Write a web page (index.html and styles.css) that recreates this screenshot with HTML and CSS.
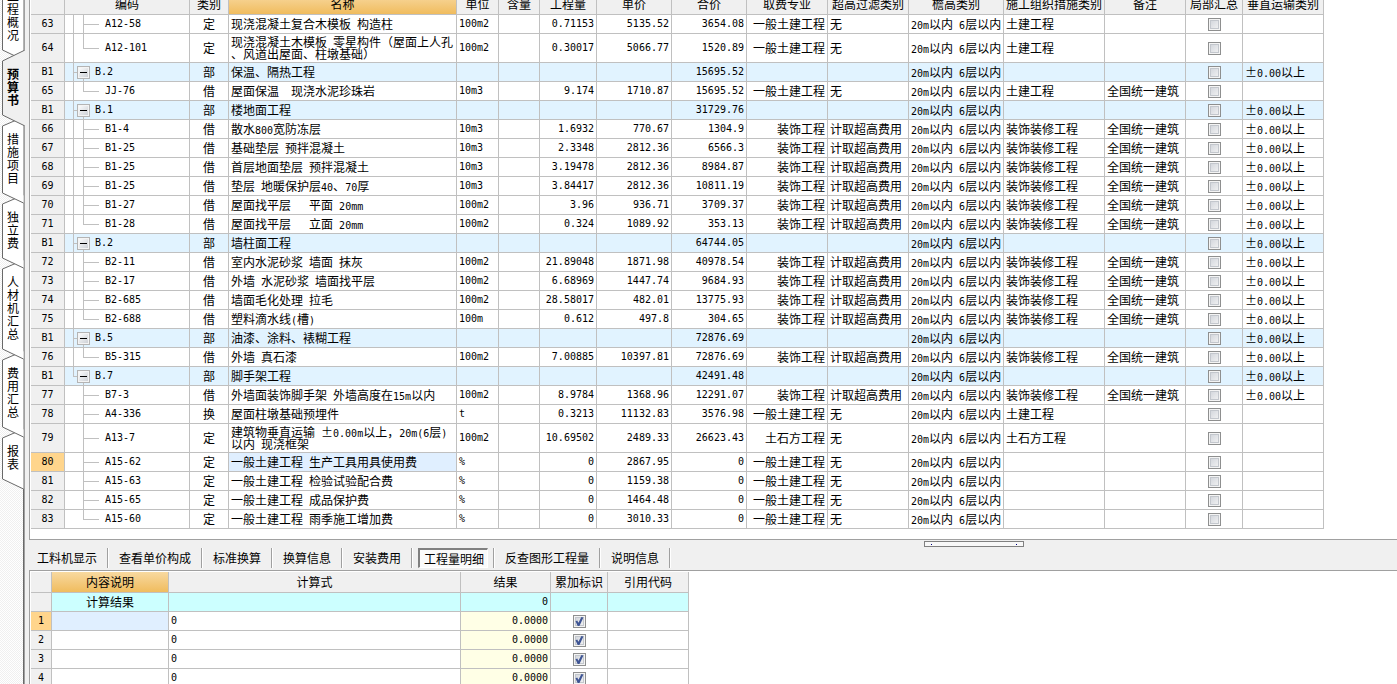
FILE: index.html
```html
<!DOCTYPE html>
<html lang="zh-CN">
<head>
<meta charset="utf-8">
<title>预算书</title>
<link rel="stylesheet" href="styles.css">
</head>
<body>
<nav class="side" aria-label="工程页签">
  <button class="side-tab"><svg class="tab-shape" width="26" height="78"><path d="M23.500-4L2.500 5V72L23.500 82"/></svg><span class="tab-text">工程概况</span></button>
  <button class="side-tab current"><svg class="tab-shape" width="26" height="65"><path class="cover" d="M22-5H26V69H22Z"/><path d="M24-5.500L2.500 5V59L24 69.500"/></svg><span class="tab-text">预算书</span></button>
  <button class="side-tab"><svg class="tab-shape" width="26" height="78"><path d="M23.500-4L2.500 5V72L23.500 82"/></svg><span class="tab-text">措施项目</span></button>
  <button class="side-tab"><svg class="tab-shape" width="26" height="65"><path d="M23.500-4L2.500 5V59L23.500 69"/></svg><span class="tab-text">独立费</span></button>
  <button class="side-tab"><svg class="tab-shape" width="26" height="91"><path d="M23.500-4L2.500 5V85L23.500 95"/></svg><span class="tab-text">人材机汇总</span></button>
  <button class="side-tab"><svg class="tab-shape" width="26" height="78"><path d="M23.500-4L2.500 5V72L23.500 82"/></svg><span class="tab-text">费用汇总</span></button>
  <button class="side-tab"><svg class="tab-shape" width="26" height="52"><path d="M23.500-4L2.500 5V46L23.500 56"/></svg><span class="tab-text">报表</span></button>
</nav>
<main class="main">
  <section class="panel budget">
    <table class="grid">
      <colgroup>
        <col class="w34"><col class="w125"><col class="w39"><col class="w228"><col class="w42"><col class="w41"><col class="w57"><col class="w75"><col class="w75"><col class="w81"><col class="w81"><col class="w95"><col class="w101"><col class="w81"><col class="w57"><col class="w81">
      </colgroup>
      <thead>
        <tr><th></th><th>编码</th><th>类别</th><th class="hot">名称</th><th>单位</th><th>含量</th><th>工程量</th><th>单价</th><th>合价</th><th>取费专业</th><th>超高过滤类别</th><th>檐高类别</th><th>施工组织措施类别</th><th>备注</th><th>局部汇总</th><th>垂直运输类别</th></tr>
      </thead>
      <tbody id="budget-rows"></tbody>
    </table>
  </section>
  <div class="splitter"><button class="handle" aria-label="调整面板高度"></button></div>
  <div class="tabs" role="tablist">
    <div class="slot"><button class="tab" role="tab">工料机显示</button></div>
    <div class="slot"><button class="tab" role="tab">查看单价构成</button></div>
    <div class="slot"><button class="tab" role="tab">标准换算</button></div>
    <div class="slot"><button class="tab" role="tab">换算信息</button></div>
    <div class="slot"><button class="tab" role="tab">安装费用</button></div>
    <div class="slot"><button class="tab pressed" role="tab" aria-selected="true">工程量明细</button></div>
    <div class="slot"><button class="tab" role="tab">反查图形工程量</button></div>
    <div class="slot"><button class="tab" role="tab">说明信息</button></div>
  </div>
  <section class="panel detail">
    <table class="grid">
      <colgroup><col class="w21"><col class="w117"><col class="w292"><col class="w90"><col class="w57"><col class="w81"></colgroup>
      <thead>
        <tr><th></th><th class="hot">内容说明</th><th>计算式</th><th>结果</th><th>累加标识</th><th>引用代码</th></tr>
      </thead>
      <tbody id="detail-rows">
        <tr class="total"><td class="label"></td><td class="center">计算结果</td><td></td><td class="num">0</td><td></td><td></td></tr>
      </tbody>
    </table>
  </section>
</main>
<script src="app.js"></script>
</body>
</html>
```
FILE: styles.css
```css
* { box-sizing: border-box; }

body {
  margin: 0;
  height: 100vh;
  display: flex;
  overflow: hidden;
  background: #f0f0f0;
  color: #000;
  font: 12px/18px "Noto Sans CJK SC", sans-serif;
}

button {
  font: inherit;
  color: inherit;
  border: 0;
  padding: 0;
  margin: 0;
  background: none;
}

.n, .num, .unit, .label, .tree {
  font-family: "DejaVu Sans Mono", "Noto Sans CJK SC", monospace;
  font-size: 10px;
}

.n { line-height: 8px; }

/* Side tabs */
.side {
  flex: none;
  width: 25px;
  padding-right: 2px;
  display: flex;
  flex-direction: column;
  border-right: 1px solid #a0a0a0;
  background:
    linear-gradient(#696969, #696969) right / 1px 100% no-repeat,
    repeating-conic-gradient(#fff 0 25%, #f0f0f0 0 50%) 0 0 / 2px 2px;
}

.side-tab {
  position: relative;
  flex: none;
  padding: 11px 4px 15px 7px;
  line-height: 13px;
}

.side-tab:first-child { margin-top: -22px; }
.side-tab:nth-child(1) { z-index: 7; }
.side-tab:nth-child(3) { z-index: 6; }
.side-tab:nth-child(4) { z-index: 5; }
.side-tab:nth-child(5) { z-index: 4; }
.side-tab:nth-child(6) { z-index: 3; }
.side-tab:nth-child(7) { z-index: 2; }
.side-tab.current { z-index: 8; font-weight: bold; }

.tab-shape {
  position: absolute;
  left: 0;
  top: 0;
  overflow: visible;
  fill: #fff;
  stroke: #696969;
}

.current .tab-shape { fill: #f0f0f0; }
.tab-shape .cover { stroke: none; }

.tab-text {
  position: relative;
  display: block;
  width: 12px;
  word-break: break-all;
}

/* Panels */
.main {
  flex: 1;
  min-width: 0;
  margin-left: 4px;
  display: flex;
  flex-direction: column;
}

.panel {
  flex: none;
  overflow: hidden;
  padding-left: 1px;
  background: #fff;
  border-left: 1px solid #a0a0a0;
}

.budget {
  padding-bottom: 10px;
  border-bottom: 1px solid #a0a0a0;
}

.budget .grid { margin-top: -6px; }

.detail {
  flex: 1 0 0;
  padding-top: 1px;
  border-top: 1px solid #a0a0a0;
}

/* Grid tables */
.grid {
  table-layout: fixed;
  width: 0;
  border-spacing: 0;
}

.w21 { width: 21px; }
.w34 { width: 34px; }
.w39 { width: 39px; }
.w41 { width: 41px; }
.w42 { width: 42px; }
.w57 { width: 57px; }
.w75 { width: 75px; }
.w81 { width: 81px; }
.w90 { width: 90px; }
.w95 { width: 95px; }
.w101 { width: 101px; }
.w117 { width: 117px; }
.w125 { width: 125px; }
.w228 { width: 228px; }
.w292 { width: 292px; }

.grid th, .grid td {
  height: 19px;
  padding: 0 2px;
  border-right: 1px solid #c0c0c0;
  border-bottom: 1px solid #c0c0c0;
  line-height: 16px;
  white-space: pre;
  vertical-align: middle;
}

.grid th {
  height: 21px;
  padding: 0;
  font-weight: normal;
  background: #f0f0f0;
}

.grid .tall td { height: 29px; }
.grid .hot { background: linear-gradient(#f8d9a0, #f0bc5e); }
.grid .label { text-align: center; background: #f0f0f0; }
.grid .active { background: #ffd58c; }
.grid .selected { background: #e0efff; }
.grid .num, .grid .right { text-align: right; }
.grid .center { text-align: center; }
.grid .sum { background: #ffffe6; }
.group td { background: #e1f3ff; }
.total td { background: #ccffff; }

.two-line {
  display: block;
  line-height: 12px;
}

.wide {
  display: inline-block;
  width: 12px;
  line-height: 12px;
  text-align: center;
}

/* Code column */
.grid .code { padding: 0 0 0 8px; }

.tree {
  display: flex;
  align-items: center;
  height: 18px;
}

.tall .tree { height: 28px; }

.rail {
  align-self: stretch;
  width: 10px;
  background: linear-gradient(#c0c0c0, #c0c0c0) 0 0 / 1px 100% no-repeat;
}

.rail.none { background: none; }

.branch {
  align-self: stretch;
  width: 16px;
  margin-right: 6px;
  background:
    linear-gradient(#c0c0c0, #c0c0c0) 0 0 / 1px 100% no-repeat,
    linear-gradient(#c0c0c0, #c0c0c0) 0 50% / 100% 1px no-repeat;
}

.branch.stem { width: 4px; margin-right: 0; }
.branch.last { background-size: 1px 50%, 100% 1px; }

.toggle-wrap {
  align-self: stretch;
  display: flex;
  align-items: center;
  margin-right: 5px;
  background: linear-gradient(#c0c0c0, #c0c0c0) 6px 100% / 1px 4px no-repeat;
}

.toggle {
  width: 13px;
  height: 13px;
  border: 1px solid #b4b4b4;
  background:
    linear-gradient(#000, #000) center / 7px 1px no-repeat,
    linear-gradient(135deg, #fff, #c9cdd3);
  box-shadow: inset 0 0 0 1px #f4f4f4;
}

/* Check boxes */
.check {
  appearance: none;
  display: block;
  width: 13px;
  height: 13px;
  margin: 1px auto 0;
  border: 1px solid #8e8f8f;
  box-shadow: inset 0 0 0 1px #f4f4f4, inset 0 0 0 2px #c3c7cd;
  background: linear-gradient(135deg, #cdd1d8, #f6f6f6);
}

.check:checked::after {
  content: "";
  display: block;
  width: 11px;
  height: 11px;
  background: #3f5594;
  clip-path: polygon(18% 48%, 34% 42%, 45% 62%, 72% 10%, 90% 14%, 54% 90%, 38% 90%);
}

/* Splitter and tabs */
.splitter {
  flex: none;
  height: 8px;
  padding-top: 1px;
}

.handle {
  display: flex;
  justify-content: space-between;
  align-items: center;
  width: 100px;
  height: 6px;
  margin-left: 895px;
  padding: 0 6px;
  border: 1px solid #808080;
  background: #f8f8f8;
}

.handle::before, .handle::after {
  content: "";
  width: 1px;
  height: 1px;
  background: #000080;
}

.tabs {
  flex: none;
  display: flex;
  padding-bottom: 2px;
  height: 22px;
}

.slot {
  display: flex;
  padding: 0 5px;
  margin-right: 1px;
  border-right: 1px solid #a0a0a0;
  box-shadow: 1px 0 #fff;
}

.slot:first-child { padding-left: 3px; }

.tab {
  padding: 0 5px;
  border: 0 solid #fff;
  white-space: nowrap;
}

.tab.pressed {
  padding: 0 3px 0 4px;
  border-width: 1px;
  border-top: 2px solid #808080;
  border-left: 2px solid #808080;
  line-height: 16px;
  background: #fafafa;
}
```
FILE: app.js
```js
const GENERAL = '一般土建工程';
const DECOR = '装饰工程';
const OVER = '计取超高费用';
const FINISH = '装饰装修工程';
const NATIONAL = '全国统一建筑';
const LEVEL = '±0.00以上';

// [label, code, kind, name, unit, quantity, price, total, trade, filter, measure, note, transport]
const decor = (label, code, name, unit, qty, price, total) =>
  [label, code, '借', name, unit, qty, price, total, DECOR, OVER, FINISH, NATIONAL, LEVEL];
const group = (code, name, total) =>
  ['B1', code, '部', name, '', '', '', total, '', '', '', '', LEVEL];
const site = (label, code, kind, name, unit, qty, price, total, measure = '土建工程', trade = GENERAL) =>
  [label, code, kind, name, unit, qty, price, total, trade, '无', measure, '', ''];

const rows = [
  site('63', 'A12-58', '定', '现浇混凝土复合木模板 构造柱', '100m2', '0.71153', '5135.52', '3654.08'),
  site('64', 'A12-101', '定', '现浇混凝土木模板 零星构件（屋面上人孔\n、风道出屋面、柱墩基础）', '100m2', '0.30017', '5066.77', '1520.89'),
  group('B.2', '保温、隔热工程', '15695.52'),
  ['65', 'JJ-76', '借', '屋面保温  现浇水泥珍珠岩', '10m3', '9.174', '1710.87', '15695.52', GENERAL, '无', '土建工程', NATIONAL, ''],
  group('B.1', '楼地面工程', '31729.76'),
  decor('66', 'B1-4', '散水800宽防冻层', '10m3', '1.6932', '770.67', '1304.9'),
  decor('67', 'B1-25', '基础垫层 预拌混凝土', '10m3', '2.3348', '2812.36', '6566.3'),
  decor('68', 'B1-25', '首层地面垫层 预拌混凝土', '10m3', '3.19478', '2812.36', '8984.87'),
  decor('69', 'B1-25', '垫层 地暖保护层40、70厚', '10m3', '3.84417', '2812.36', '10811.19'),
  decor('70', 'B1-27', '屋面找平层   平面 20mm', '100m2', '3.96', '936.71', '3709.37'),
  decor('71', 'B1-28', '屋面找平层   立面 20mm', '100m2', '0.324', '1089.92', '353.13'),
  group('B.2', '墙柱面工程', '64744.05'),
  decor('72', 'B2-11', '室内水泥砂浆 墙面 抹灰', '100m2', '21.89048', '1871.98', '40978.54'),
  decor('73', 'B2-17', '外墙 水泥砂浆 墙面找平层', '100m2', '6.68969', '1447.74', '9684.93'),
  decor('74', 'B2-685', '墙面毛化处理 拉毛', '100m2', '28.58017', '482.01', '13775.93'),
  decor('75', 'B2-688', '塑料滴水线(槽)', '100m', '0.612', '497.8', '304.65'),
  group('B.5', '油漆、涂料、裱糊工程', '72876.69'),
  decor('76', 'B5-315', '外墙 真石漆', '100m2', '7.00885', '10397.81', '72876.69'),
  group('B.7', '脚手架工程', '42491.48'),
  decor('77', 'B7-3', '外墙面装饰脚手架 外墙高度在15m以内', '100m2', '8.9784', '1368.96', '12291.07'),
  site('78', 'A4-336', '换', '屋面柱墩基础预埋件', 't', '0.3213', '11132.83', '3576.98'),
  site('79', 'A13-7', '定', '建筑物垂直运输 ±0.00m以上，20m(6层)\n以内 现浇框架', '100m2', '10.69502', '2489.33', '26623.43', '土石方工程', '土石方工程'),
  site('80', 'A15-62', '定', '一般土建工程 生产工具用具使用费', '%', '0', '2867.95', '0', ''),
  site('81', 'A15-63', '定', '一般土建工程 检验试验配合费', '%', '0', '1159.38', '0', ''),
  site('82', 'A15-65', '定', '一般土建工程 成品保护费', '%', '0', '1464.48', '0', ''),
  site('83', 'A15-60', '定', '一般土建工程 雨季施工增加费', '%', '0', '3010.33', '0', '')
];

// Latin runs are set in the half-width face, the plus-minus sign in a full-width box.
const mixed = text => text
  .replace(/[ -~]+/g, run => `<span class="n">${run}</span>`)
  .replace(/±/g, '<span class="wide">±</span>');

const lastGroup = rows.map(r => r[0]).lastIndexOf('B1');

function codeCell(row, i) {
  if (row[0] === 'B1') {
    const end = i === lastGroup ? ' last' : '';
    return `<div class="tree"><span class="branch stem${end}"></span><span class="toggle-wrap"><button class="toggle" aria-label="折叠 ${row[1]}"></button></span>${row[1]}</div>`;
  }
  const next = rows[i + 1];
  const end = !next || next[0] === 'B1' ? ' last' : '';
  const rail = i > lastGroup ? ' none' : '';
  return `<div class="tree"><span class="rail${rail}"></span><span class="branch${end}"></span>${row[1]}</div>`;
}

document.getElementById('budget-rows').innerHTML = rows.map((row, i) => {
  const [label, , kind, name, unit, qty, price, total, trade, filter, measure, note, transport] = row;
  const tall = name.includes('\n');
  const current = label === '80';
  const rowClass = label === 'B1' ? 'group' : tall ? 'tall' : '';
  const nameHtml = tall ? `<span class="two-line">${mixed(name)}</span>` : mixed(name);
  return `<tr class="${rowClass}"><td class="label${current ? ' active' : ''}">${label}</td>` +
    `<td class="code">${codeCell(row, i)}</td><td class="center">${kind}</td>` +
    `<td class="${current ? 'selected' : ''}">${nameHtml}</td><td class="unit">${unit}</td><td></td>` +
    `<td class="num">${qty}</td><td class="num">${price}</td><td class="num">${total}</td>` +
    `<td class="right">${trade}</td><td>${filter}</td><td>${mixed('20m以内 6层以内')}</td>` +
    `<td>${measure}</td><td>${note}</td>` +
    `<td><input class="check" type="checkbox" aria-label="局部汇总 ${label}"></td><td>${mixed(transport)}</td></tr>`;
}).join('');

document.getElementById('detail-rows').insertAdjacentHTML('beforeend', [1, 2, 3, 4].map(n =>
  `<tr><td class="label${n === 1 ? ' active' : ''}">${n}</td><td class="${n === 1 ? 'selected' : ''}"></td>` +
  `<td class="unit">0</td><td class="num sum">0.0000</td>` +
  `<td><input class="check" type="checkbox" checked aria-label="累加标识 ${n}"></td><td></td></tr>`
).join(''));
```
